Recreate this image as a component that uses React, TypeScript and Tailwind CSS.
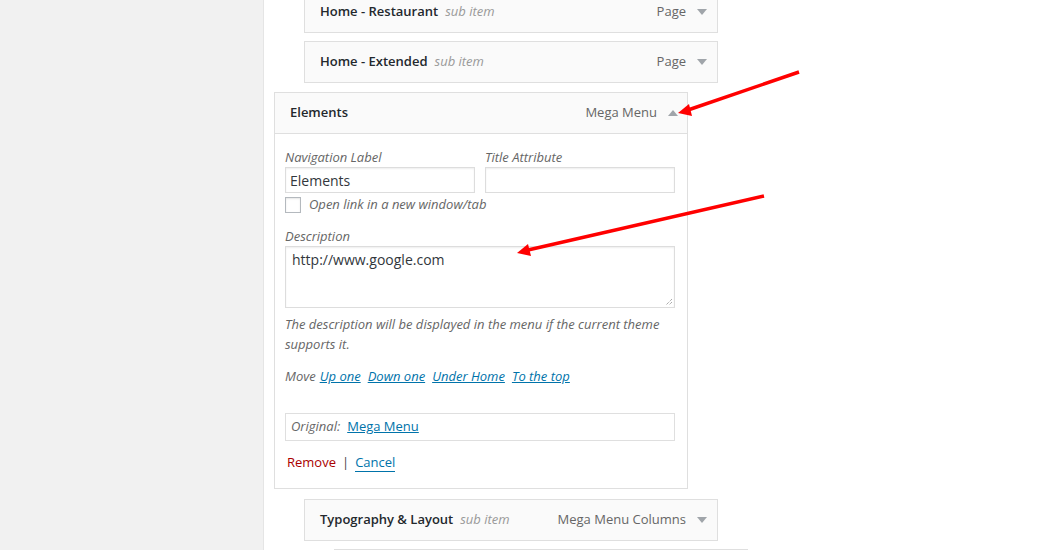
import React from 'react';

const Caret: React.FC<{ up?: boolean }> = ({ up = false }) => (
    <svg width="10" height="6" viewBox="0 0 10 6" className="ml-[11px] shrink-0">
        {up ? <polygon points="0,6 10,6 5,0" fill="#a0a5aa" /> : <polygon points="0,0 10,0 5,6" fill="#a0a5aa" />}
    </svg>
);

const MenuItem: React.FC<{ title: string; type: string; sub?: boolean; className?: string }> = ({ title, type, sub = true, className = '' }) => (
    <div className={`shrink-0 w-[414px] h-[42px] border border-[#dfdfdf] bg-[#fafafa] flex items-center pl-[15px] pr-[10px] ${className}`}>
        <span className="font-semibold text-[#23282d] text-[13px]">{title}</span>
        {sub && <span className="italic text-[#999] text-[13px] ml-[7px]">sub item</span>}
        <span className="ml-auto text-[#666] text-[13px]">{type}</span>
        <Caret />
    </div>
);

export default function App() {
    return (
        <div className="relative w-[1064px] h-[550px] overflow-hidden flex bg-white font-['Open_Sans',sans-serif]">
            {/* left grey column */}
            <div className="w-[264px] shrink-0 bg-[#f1f1f1] border-r border-[#e5e5e5]" />

            <div className="flex flex-col pl-[10px] -mt-[9px]">
                <MenuItem title="Home - Restaurant" type="Page" className="ml-[30px]" />
                <MenuItem title="Home - Extended" type="Page" className="ml-[30px] mt-[8px]" />

                {/* expanded item */}
                <div className="shrink-0 w-[414px] mt-[9px]">
                    <div className="h-[42px] border border-[#dfdfdf] bg-[#fafafa] flex items-center pl-[15px] pr-[9px]">
                        <span className="font-semibold text-[#23282d] text-[13px]">Elements</span>
                        <span className="ml-auto text-[#666] text-[13px]">Mega Menu</span>
                        <Caret up />
                    </div>
                    <div className="border border-t-0 border-[#dfdfdf] bg-white pl-[10px] pr-[12px] pt-[14px] pb-[16px] text-[13px] text-[#666]">
                        <div className="flex gap-[10px]">
                            <div className="w-[190px]">
                                <div className="italic leading-[18px]">Navigation Label</div>
                                <div className="mt-[1px] h-[26px] border border-[#ddd] shadow-[inset_0_1px_2px_rgba(0,0,0,0.07)] px-[4px] flex items-center text-[14px] text-[#32373c]">Elements</div>
                            </div>
                            <div className="w-[190px]">
                                <div className="italic leading-[18px]">Title Attribute</div>
                                <div className="mt-[1px] h-[26px] border border-[#ddd] shadow-[inset_0_1px_2px_rgba(0,0,0,0.07)]" />
                            </div>
                        </div>
                        <div className="flex items-center mt-[4px] h-[16px]">
                            <div className="w-[16px] h-[16px] border border-[#b4b9be] bg-white shadow-[inset_0_1px_2px_rgba(0,0,0,0.1)]" />
                            <span className="italic ml-[8px]">Open link in a new window/tab</span>
                        </div>
                        <div className="italic leading-[18px] mt-[14px]">Description</div>
                        <div className="relative mt-[1px] h-[62px] border border-[#ddd] shadow-[inset_0_1px_2px_rgba(0,0,0,0.07)] px-[6px] pt-[2px] text-[14px] text-[#32373c]">
                            http://www.google.com
                            <svg width="8" height="8" viewBox="0 0 8 8" className="absolute right-[1px] bottom-[1px]">
                                <path d="M7 1 L1 7 M7 4 L4 7" stroke="#888" strokeWidth="1" strokeDasharray="1 1" />
                            </svg>
                        </div>
                        <p className="italic leading-[20px] mt-[6px]">The description will be displayed in the menu if the current theme supports it.</p>
                        <div className="italic leading-[20px] mt-[12px] flex gap-[7px]">
                            <span className="-mr-[3px]">Move</span>
                            <span className="text-[#0073aa] underline">Up one</span>
                            <span className="text-[#0073aa] underline">Down one</span>
                            <span className="text-[#0073aa] underline">Under Home</span>
                            <span className="text-[#0073aa] underline">To the top</span>
                        </div>
                        <div className="mt-[27px] h-[28px] border border-[#dfdfdf] flex items-center px-[5px]">
                            <span className="italic">Original:</span>
                            <span className="ml-[7px] text-[#0073aa] underline">Mega Menu</span>
                        </div>
                        <div className="mt-[11px] leading-[20px] flex items-center">
                            <span className="text-[#a00] ml-[2px]">Remove</span>
                            <span className="mx-[6px] text-[#444]">|</span>
                            <span className="text-[#0073aa] border-b border-[#0073aa] leading-[18px]">Cancel</span>
                        </div>
                    </div>
                </div>

                <MenuItem title="Typography & Layout" type="Mega Menu Columns" className="ml-[30px] mt-[10px]" />
                <div className="shrink-0 ml-[60px] mt-[8px] w-[414px] h-[42px] border border-[#dfdfdf] bg-[#fafafa]" />
            </div>

            {/* annotation arrows */}
            <svg className="absolute inset-0 pointer-events-none" width="1064" height="550">
                <line x1="799" y1="72" x2="688" y2="110" stroke="#f00" strokeWidth="3.5" />
                <polygon points="678,113 689,104 692,116" fill="#f00" />
                <line x1="764" y1="196" x2="528" y2="250" stroke="#f00" strokeWidth="3.5" />
                <polygon points="517,253 528,244 531,256" fill="#f00" />
            </svg>
        </div>
    );
}
